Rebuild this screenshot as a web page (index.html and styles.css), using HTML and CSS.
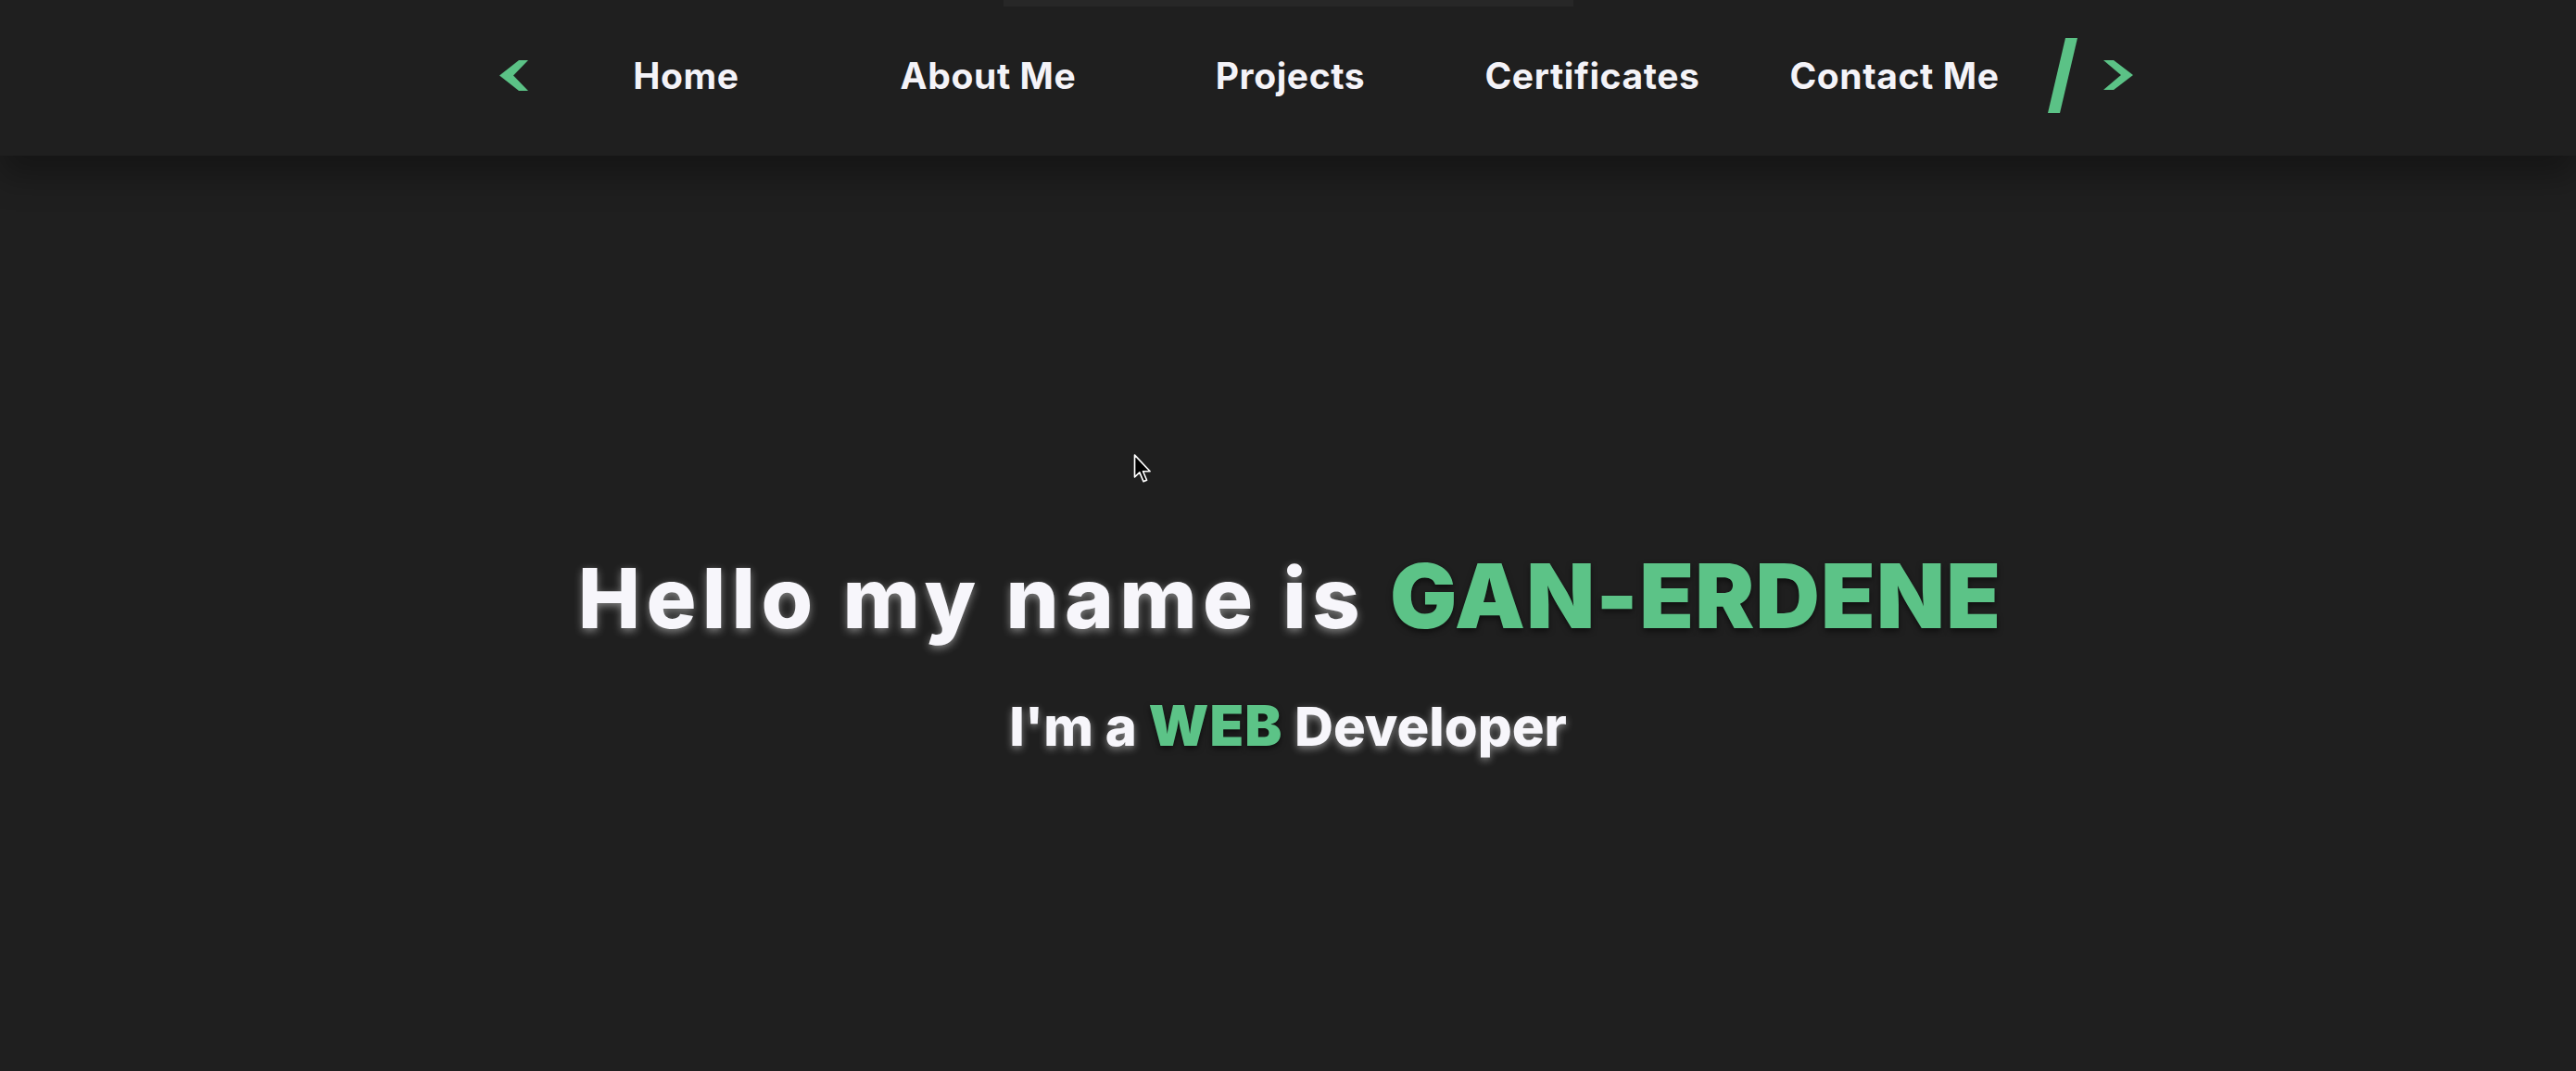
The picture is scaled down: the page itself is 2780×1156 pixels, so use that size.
FILE: index.html
```html
<!DOCTYPE html>
<html lang="en">
<head>
<meta charset="utf-8">
<title>Gan-Erdene</title>
<link rel="stylesheet" href="styles.css">
</head>
<body>
<header class="nav">
  <div class="nav-strip"></div>
  <div class="nav-row">
    <svg class="chev chev-left" width="31" height="33" viewBox="0 0 31 33"><polygon points="21,0 31,0 15,16.5 31,33 21,33 0,16.5" fill="#5bc286"/></svg>
    <ul class="nav-links">
      <li>Home</li>
      <li>About Me</li>
      <li>Projects</li>
      <li>Certificates</li>
      <li>Contact Me</li>
    </ul>
    <svg class="slash" width="33" height="81" viewBox="0 0 33 81"><polygon points="19,0 32,0 13,81 0,81" fill="#5bc286"/></svg>
    <svg class="chev chev-right" width="32" height="32" viewBox="0 0 32 32"><polygon points="0,0 11,0 32,16 11,32 0,32 19,16" fill="#5bc286"/></svg>
  </div>
</header>
<main class="hero">
  <h1 class="hero-title">Hello my name is <span class="accent">GAN-ERDENE</span></h1>
  <p class="hero-sub">I'm a <span class="accent small">WEB</span> Developer</p>
  <svg class="cursor" width="22" height="32" viewBox="0 0 18 27"><path d="M1 1 L1 21 L5.5 16.8 L9 25 L12 23.8 L8.6 15.8 L15 15.8 Z" fill="#000" stroke="#fff" stroke-width="1.4" stroke-linejoin="round"/></svg>
</main>
</body>
</html>
```
FILE: styles.css
```css
html, body {
  margin: 0;
  padding: 0;
}
body {
  background: #1f1f1f;
  font-family: "Inter", "Liberation Sans", sans-serif;
  color: #f5f4f9;
  min-height: 1156px;
  overflow: hidden;
}
.nav {
  position: relative;
  height: 168px;
  background: #1f1f1f;
  box-shadow: 0 22px 34px rgba(0, 0, 0, 0.32);
  z-index: 2;
}
.nav-strip {
  position: absolute;
  top: 0;
  left: 50%;
  width: 615px;
  height: 7px;
  margin-left: -307px;
  background: #272727;
}
.nav-row {
  height: 168px;
  box-sizing: border-box;
  padding: 0 0 6px 60px;
  display: flex;
  align-items: center;
  justify-content: center;
}
.chev-left {
  margin-right: 8px;
}
.nav-links {
  list-style: none;
  margin: 0;
  padding: 0;
  display: flex;
}
.nav-links li {
  width: 326px;
  text-align: center;
  font-size: 39px;
  font-weight: 650;
  letter-spacing: 0.6px;
  color: #f4f3f8;
}
.slash {
  margin-left: 2px;
  margin-right: 27px;
}
.hero {
  position: relative;
  display: flex;
  flex-direction: column;
  align-items: center;
  padding-top: 421px;
}
.hero-title {
  margin: 0 0 0 4px;
  font-size: 90px;
  font-weight: 800;
  letter-spacing: 6.3px;
  line-height: 109px;
  color: #f7f6fb;
  text-shadow: 0 3px 10px rgba(255, 255, 255, 0.45);
  white-space: nowrap;
}
.accent {
  color: #5cc387;
  font-size: 96px;
  font-weight: 900;
  letter-spacing: 1.2px;
  text-shadow: 0 3px 6px rgba(0, 0, 0, 0.55);
}
.hero-sub {
  margin: 48px 0 0;
  font-size: 58px;
  font-weight: 800;
  line-height: 70px;
  color: #f7f6fb;
  text-shadow: 0 3px 9px rgba(255, 255, 255, 0.45);
  white-space: nowrap;
}
.accent.small {
  font-size: 60px;
  letter-spacing: 1px;
}
.cursor {
  position: absolute;
  left: 1223px;
  top: 322px;
}
```
